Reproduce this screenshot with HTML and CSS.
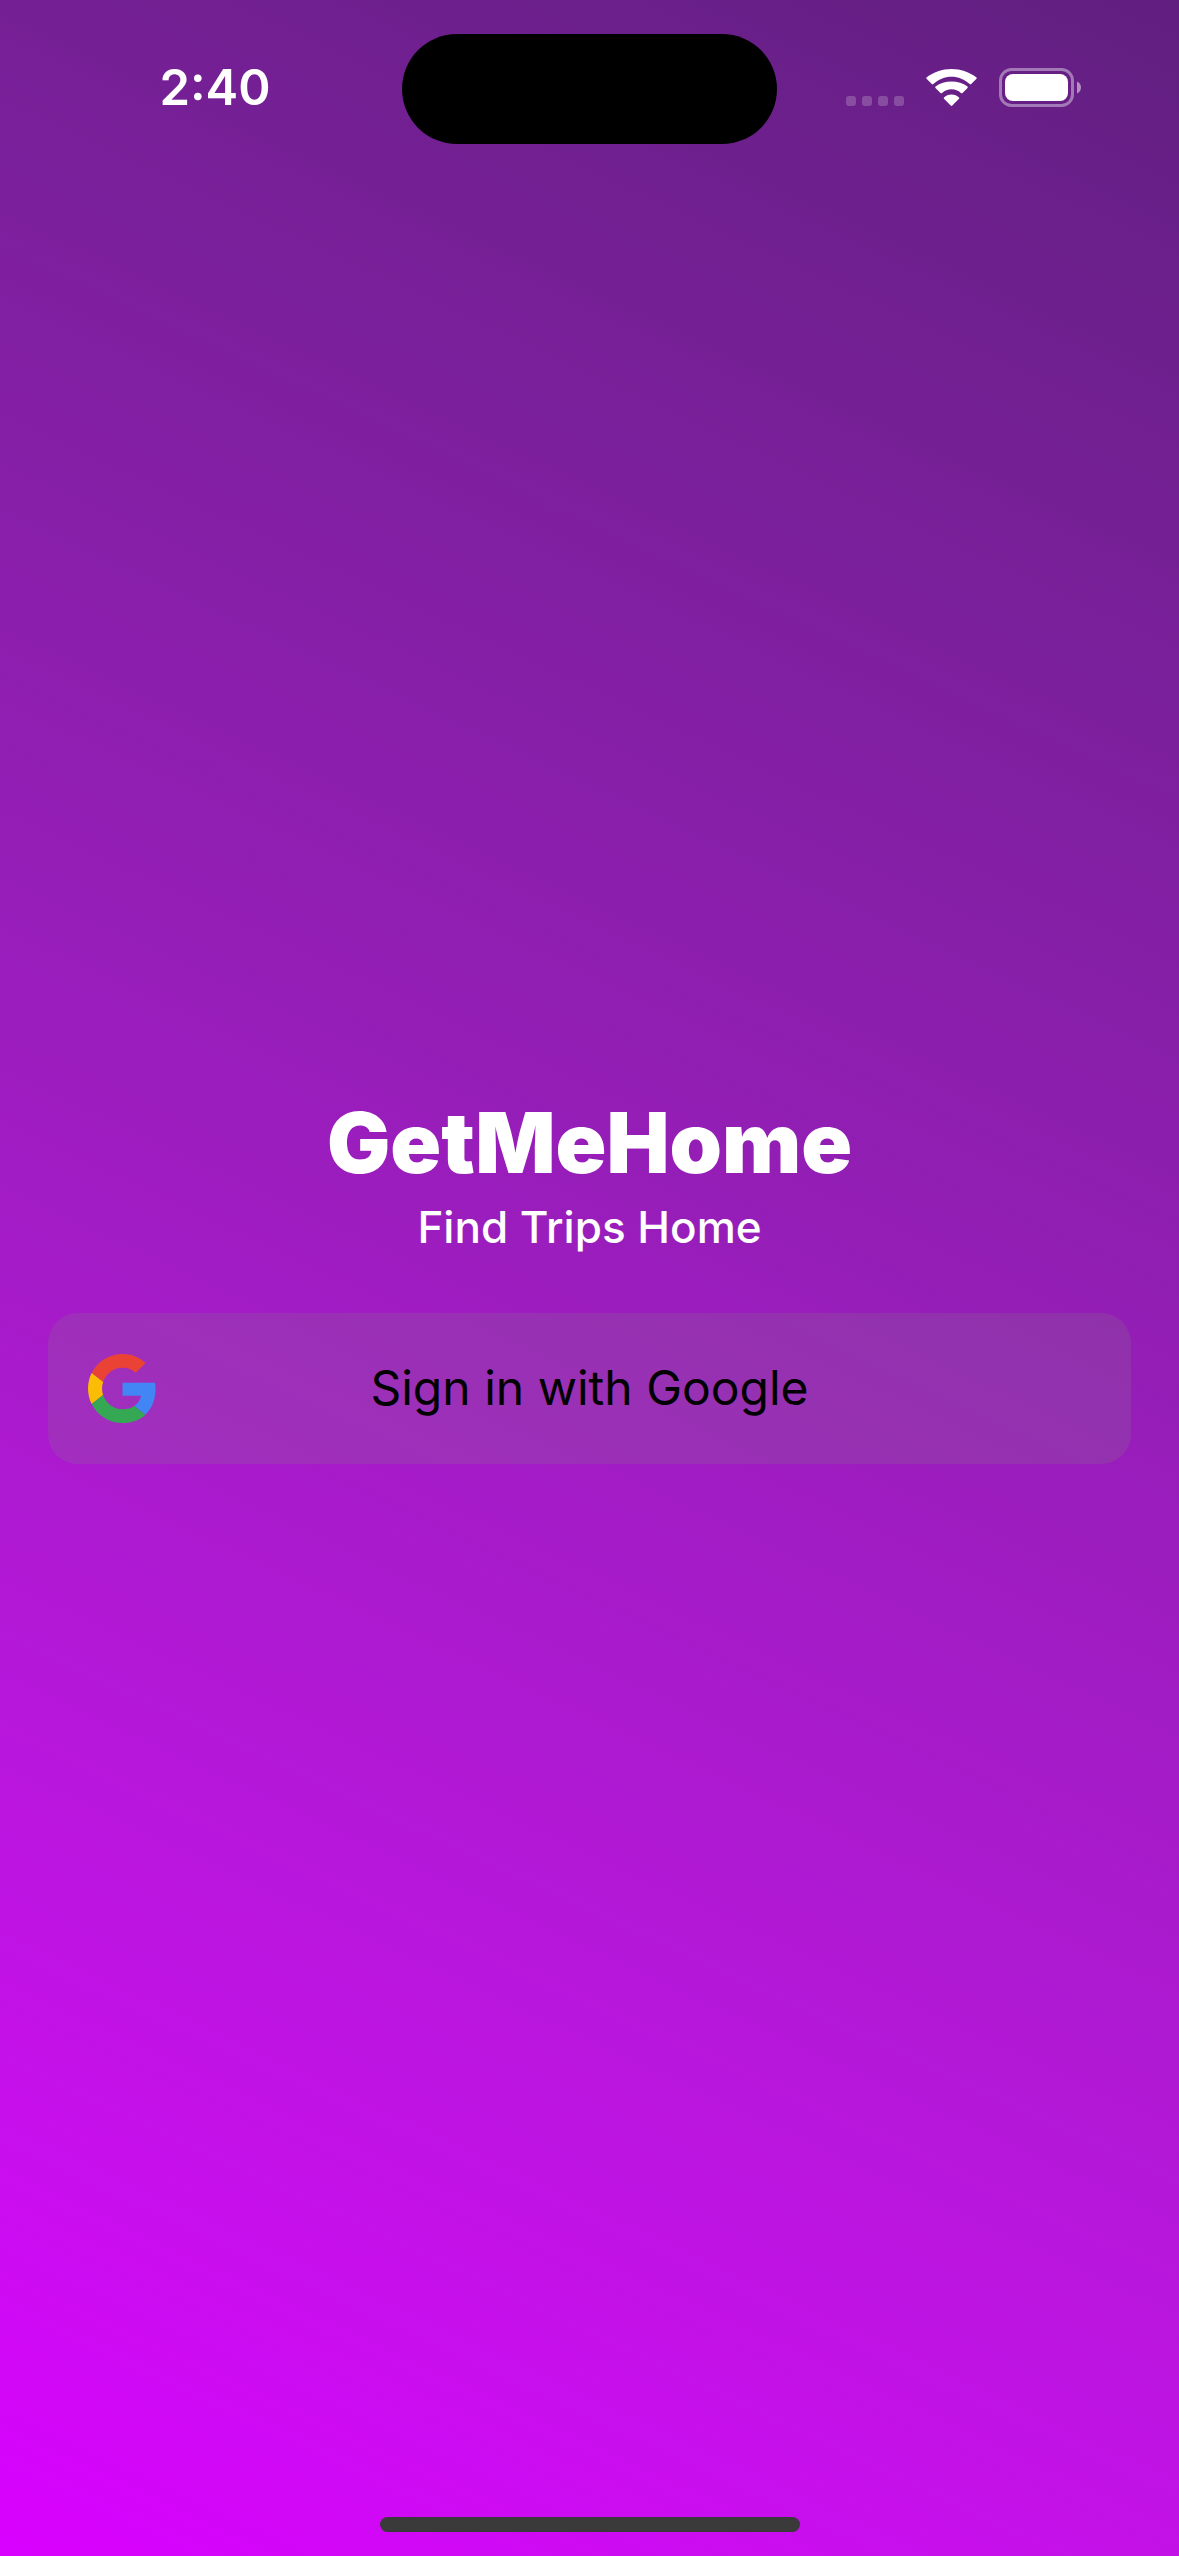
FILE: index.html
```html
<!DOCTYPE html>
<html lang="en">
<head>
<meta charset="utf-8">
<meta name="viewport" content="width=device-width, initial-scale=1">
<title>GetMeHome</title>
<link rel="stylesheet" href="styles.css">
</head>
<body>
<div class="screen">
  <header class="status">
    <time class="clock">2:40</time>
    <div class="island"></div>
    <div class="indicators">
      <svg class="signal" viewBox="0 0 58 10" aria-hidden="true"><rect width="10" height="10" rx="3"/><rect x="16" width="10" height="10" rx="3"/><rect x="32" width="10" height="10" rx="3"/><rect x="48" width="10" height="10" rx="3"/></svg>
      <svg class="wifi" viewBox="0 0 51 37" aria-hidden="true"><path d="M25.500 7.800c6.800 0 13.200 2.600 18.200 7.300.5.500 1.100.5 1.500 0l5.300-5.300c.4-.4.4-.9 0-1.300C43.600 3.100 34.800 0 25.500 0S7.400 3.100.5 8.500c-.4.400-.4.900 0 1.300l5.300 5.300c.4.500 1 .5 1.500 0 5-4.700 11.400-7.300 18.200-7.300z"/><path d="M25.500 20.200c3.500 0 6.800 1.300 9.400 3.700.5.500 1.100.5 1.600 0l5-5c.4-.4.4-1 0-1.400-4.400-3.300-10-5-16-5s-11.600 1.700-16 5c-.4.400-.4 1 0 1.400l5 5c.5.500 1.100.5 1.600 0 2.600-2.400 5.900-3.700 9.400-3.700z"/><path d="M33 28.500c.4.400.4.900 0 1.300l-6.700 6.700c-.5.500-1.100.5-1.600 0L18 29.800c-.4-.4-.4-.9 0-1.300 1.900-1.900 4.500-3 7.500-3s5.600 1.100 7.500 3z"/></svg>
      <svg class="battery" viewBox="0 0 82 39" aria-hidden="true"><rect class="shell" x="1.500" y="1.500" width="72" height="36" rx="11"/><rect x="6" y="6" width="63" height="27" rx="8"/><path class="cap" d="M78 13.500v12c2.400-1 4-3.300 4-6s-1.600-5-4-6z"/></svg>
    </div>
  </header>
  <main class="content">
    <h1 class="title">GetMeHome</h1>
    <p class="subtitle">Find Trips Home</p>
    <button class="signin" type="button">
      <svg class="google" viewBox="0 0 48 48" aria-hidden="true"><path fill="#EA4335" d="M24 9.500c3.540 0 6.710 1.220 9.210 3.600l6.850-6.850C35.900 2.380 30.470 0 24 0 14.620 0 6.510 5.380 2.560 13.220l7.980 6.190C12.430 13.720 17.740 9.500 24 9.500z"/><path fill="#4285F4" d="M46.980 24.550c0-1.570-.15-3.090-.38-4.550H24v9.020h12.940c-.58 2.960-2.260 5.480-4.780 7.180l7.730 6c4.510-4.180 7.090-10.360 7.090-17.650z"/><path fill="#FBBC05" d="M10.530 28.590c-.48-1.450-.76-2.990-.76-4.590s.27-3.140.76-4.590l-7.980-6.190C.92 16.460 0 20.120 0 24c0 3.880.92 7.540 2.560 10.780l7.970-6.190z"/><path fill="#34A853" d="M24 48c6.480 0 11.930-2.130 15.890-5.810l-7.730-6c-2.150 1.450-4.920 2.300-8.160 2.300-6.260 0-11.570-4.220-13.470-9.910l-7.980 6.190C6.510 42.620 14.620 48 24 48z"/></svg>
      <span class="label">Sign in with Google</span>
    </button>
  </main>
  <footer class="home"><div class="bar"></div></footer>
</div>
</body>
</html>
```
FILE: styles.css
```css
* { box-sizing: border-box; }

body {
  margin: 0;
  font-family: Inter, "Liberation Sans", sans-serif;
  color: #fff;
}

.screen {
  display: grid;
  grid-template-rows: 177px 1fr 177px;
  min-height: 100vh;
  background: linear-gradient(25deg in oklab, #d900ff, #611f80);
}

.status {
  display: grid;
  grid-template-columns: 1fr 375px 1fr;
  align-items: center;
  height: 110px;
  margin-top: 34px;
}

.clock {
  padding: 0 0 2px 28px;
  font-size: 49px;
  font-weight: 600;
  line-height: 60px;
  text-align: center;
}

.island {
  height: 110px;
  border-radius: 55px;
  background: #000;
}

.indicators {
  display: flex;
  justify-content: flex-end;
  align-items: flex-end;
  gap: 22px;
  padding: 0 98px 3px 0;
  fill: #fff;
}

.signal,
.wifi { margin-bottom: 1px; }
.signal { width: 58px; height: 10px; opacity: 0.2; }
.wifi { width: 51px; height: 37px; }
.battery { width: 82px; height: 39px; }
.shell { fill: none; stroke: #fff; stroke-width: 3; opacity: 0.4; }
.cap { opacity: 0.5; }

.content {
  display: flex;
  flex-direction: column;
  justify-content: center;
  align-items: center;
  padding: 0 48px;
}

.title {
  margin: 0 0 4px;
  font-size: 84px;
  font-weight: 900;
  line-height: 100px;
}

.subtitle {
  margin: 0 0 56px;
  font-size: 44px;
  font-weight: 450;
  line-height: 60px;
}

.signin {
  display: grid;
  grid-template-columns: 69px 1fr 69px;
  align-items: center;
  width: 100%;
  height: 151px;
  padding: 0 40px;
  border: 0;
  border-radius: 30px;
  background: rgba(128, 128, 128, 0.2);
  color: #000;
  font: 400 48px/60px Inter, "Liberation Sans", sans-serif;
}

.google { width: 69px; height: 69px; }

.home {
  display: flex;
  justify-content: center;
  align-items: flex-end;
  padding-bottom: 24px;
}

.bar {
  width: 420px;
  height: 15px;
  border-radius: 8px;
  background: #3a3a3a;
}
```
